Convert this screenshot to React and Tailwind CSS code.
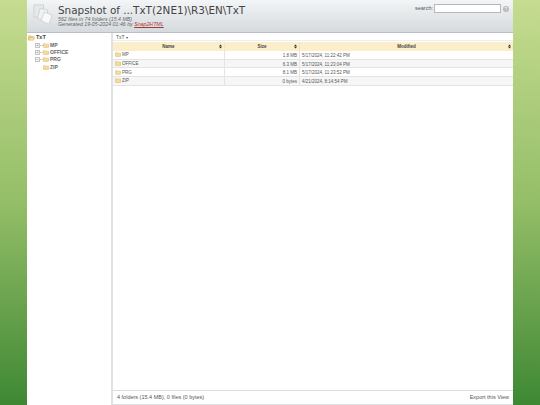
const folders = [
  { name: "MP", size: "1.8 MB", date: "5/17/2024, 11:22:42 PM" },
  { name: "OFFICE", size: "6.3 MB", date: "5/17/2024, 11:23:04 PM" },
  { name: "PRG", size: "8.1 MB", date: "5/17/2024, 11:23:52 PM" },
  { name: "ZIP", size: "0 bytes", date: "4/21/2024, 8:14:54 PM" },
];

function Folder({ className }) {
  return (
    <svg viewBox="0 0 16 12" className={className}>
      <path d="M1 3V2q0-1 1-1h4l1 1.5h7q1 0 1 1V10q0 1-1 1H2q-1 0-1-1z" fill="#f8dc9c" stroke="#c9a050" strokeWidth="1" />
    </svg>
  );
}

function OpenFolder({ className }) {
  return (
    <svg viewBox="0 0 16 12" className={className}>
      <path d="M1 10V2q0-1 1-1h4l1 1.5h5q1 0 1 1V5" fill="#f6d58c" stroke="#c79a45" strokeWidth="1" />
      <path d="M1 11l2.5-6H15l-2.5 6z" fill="#fbe5ad" stroke="#c79a45" strokeWidth="1" />
    </svg>
  );
}

function SortArrows() {
  return (
    <svg viewBox="0 0 5 7" className="w-[3px] h-[5px] shrink-0">
      <path d="M2.5 0L5 3H0zM2.5 7L0 4h5z" fill="#333" />
    </svg>
  );
}

function TreeRow({ name, mark }) {
  return (
    <div className="flex items-center h-[7.3px] pl-[7px]">
      <span className="w-[5px] h-[5px] shrink-0 border border-[#c4c4c4] bg-[#f4f4f4] flex items-center justify-center text-[4px] leading-none text-[#555]">
        {mark}
      </span>
      <span className="w-[3px] border-t border-dotted border-[#bbb]" />
      <Folder className="w-[6px] h-[5px] shrink-0" />
      <span className="ml-[1px] text-[5px] font-bold text-[#666] leading-none">{name}</span>
    </div>
  );
}

function App() {
  return (
    <div className="h-[405px] w-[540px] overflow-hidden flex justify-center bg-gradient-to-b from-[#c6dc90] via-[#94be68] to-[#3d8833] font-['Liberation_Sans',sans-serif] antialiased">
      <div className="w-[486px] h-full flex flex-col bg-white">
        <header className="h-[33px] shrink-0 flex justify-between bg-gradient-to-b from-[#f3f5f6] to-[#d5dade] border-b border-[#b9bfc4]">
          <div className="flex">
            <svg viewBox="0 0 24 24" className="w-[21px] h-[21px] ml-[6px] mt-[4px]">
              <path d="M1 1h11v14H1z" fill="#e6e9ea" stroke="#cdd1d4" strokeWidth="1" />
              <path d="M8 5l9 2-3 12-9-2z" fill="#eff1f2" stroke="#cdd1d4" strokeWidth="1" />
              <path d="M13 9l9 4-4 10-9-4z" fill="#f8f9f9" stroke="#cdd1d4" strokeWidth="1" />
            </svg>
            <div className="ml-[4px] pt-[5px]">
              <h1 className="text-[10.4px] leading-[11px] text-[#444] whitespace-nowrap font-['DejaVu_Sans',sans-serif]">
                Snapshot of ...TxT(2NE1)\R3\EN\TxT
              </h1>
              <p className="mt-[1px] text-[5.25px] leading-[5px] italic text-[#666]">562 files in 74 folders (15.4 MB)</p>
              <p className="text-[5.25px] leading-[5px] italic text-[#666]">
                Generated 19-05-2024 01:46 by <span className="text-[#a33] underline">Snap2HTML</span>
              </p>
            </div>
          </div>
          <div className="flex items-start pt-[4px] pr-[4px]">
            <span className="text-[5.5px] leading-[9px] text-[#555] mr-[1px]">search:</span>
            <span className="w-[67px] h-[9px] bg-white border border-[#b4b8bb]" />
            <span className="ml-[2px] mt-[2px] w-[6px] h-[6px] rounded-full bg-[#b5b8ba] text-white text-[5px] leading-[6px] text-center">?</span>
          </div>
        </header>

        <div className="flex flex-1 min-h-0">
          <aside className="w-[84px] shrink-0 pt-[1px] pl-[1px]">
            <div className="flex items-center h-[7.5px]">
              <OpenFolder className="w-[7px] h-[6px]" />
              <span className="ml-[1px] text-[5.5px] font-bold text-[#444] leading-none">TxT</span>
            </div>
            <TreeRow name="MP" mark="+" />
            <TreeRow name="OFFICE" mark="+" />
            <TreeRow name="PRG" mark="−" />
            <div className="flex items-center h-[7.3px] pl-[15px]">
              <Folder className="w-[6px] h-[5px] shrink-0" />
              <span className="ml-[1px] text-[5px] font-bold text-[#666] leading-none">ZIP</span>
            </div>
          </aside>

          <div className="w-[2px] shrink-0 bg-[#dfe2e4]" />

          <main className="flex-1 min-w-0 flex flex-col border-b border-[#dfe2e4]">
            <div className="h-[8px] shrink-0 pl-[3px] text-[5px] leading-[8px] text-[#555] border-b border-[#eee]">
              TxT<span className="text-[3.5px] align-middle"> ▾</span>
            </div>
            <div className="flex h-[9px] mt-[1px] shrink-0 bg-[#fdeecb] text-[4.5px] font-bold text-[#444] leading-[9px]">
              <div className="w-[112px] flex items-center justify-center relative border-r border-[#f3e4c2]">
                Name
                <span className="absolute right-[2px] flex"><SortArrows /></span>
              </div>
              <div className="w-[75px] flex items-center justify-center relative border-r border-[#f3e4c2]">
                Size
                <span className="absolute right-[2px] flex"><SortArrows /></span>
              </div>
              <div className="flex-1 flex items-center justify-center relative">
                Modified
                <span className="absolute right-[2px] flex"><SortArrows /></span>
              </div>
            </div>
            {folders.map((f, i) => (
              <div key={f.name} className={`flex h-[8.7px] shrink-0 text-[4.5px] leading-[9px] text-[#555] border-b border-[#e4e4e4] ${i % 2 ? "bg-[#f6f6f6]" : "bg-white"}`}>
                <div className="w-[112px] flex items-center pl-[2px] border-r border-[#e4e4e4]">
                  <Folder className="w-[6px] h-[5px] mr-[1px] shrink-0" />
                  {f.name}
                </div>
                <div className="w-[75px] text-right pr-[2px] border-r border-[#e4e4e4]">{f.size}</div>
                <div className="flex-1 pl-[2px]">{f.date}</div>
              </div>
            ))}
            <div className="flex-1" />
            <footer className="h-[14px] shrink-0 flex justify-between items-center px-[4px] text-[5.5px] text-[#555] border-t border-[#ddd]">
              <span>4 folders (15.4 MB), 0 files (0 bytes)</span>
              <span>Export this View</span>
            </footer>
          </main>
        </div>
      </div>
    </div>
  );
}

export default App;
